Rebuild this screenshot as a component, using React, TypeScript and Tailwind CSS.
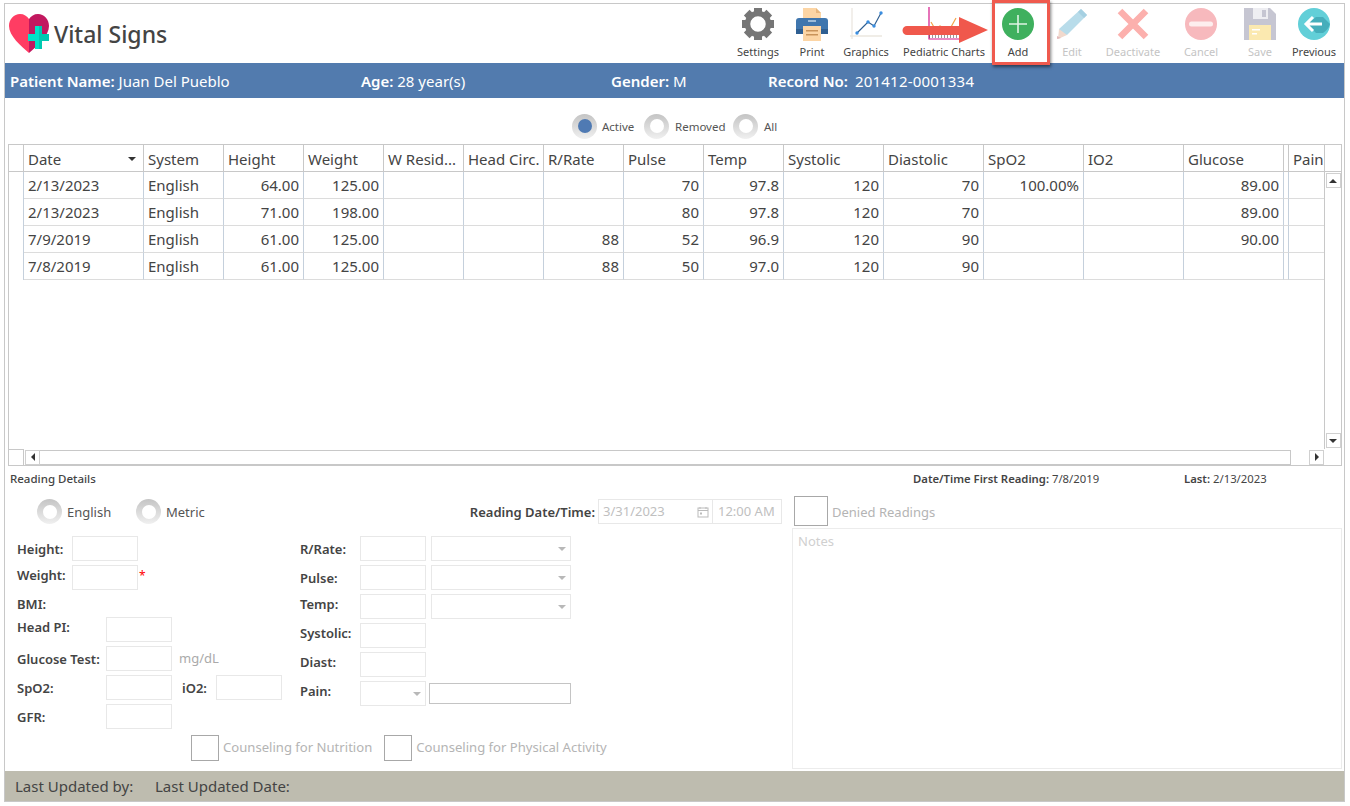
const columns = [
  { label: "Date", width: "w-[120px]" },
  { label: "System", width: "w-[80px]" },
  { label: "Height", width: "w-[80px]" },
  { label: "Weight", width: "w-[80px]" },
  { label: "W Resid...", width: "w-[80px]" },
  { label: "Head Circ.", width: "w-[80px]" },
  { label: "R/Rate", width: "w-[80px]" },
  { label: "Pulse", width: "w-[80px]" },
  { label: "Temp", width: "w-[80px]" },
  { label: "Systolic", width: "w-[100px]" },
  { label: "Diastolic", width: "w-[100px]" },
  { label: "SpO2", width: "w-[100px]" },
  { label: "IO2", width: "w-[100px]" },
  { label: "Glucose", width: "w-[100px]" },
  { label: "", width: "w-[5px]" },
  { label: "Pain", width: "w-[40px]" },
];

const rows = [
  ["2/13/2023", "English", "64.00", "125.00", "", "", "", "70", "97.8", "120", "70", "100.00%", "", "89.00", "", ""],
  ["2/13/2023", "English", "71.00", "198.00", "", "", "", "80", "97.8", "120", "70", "", "", "89.00", "", ""],
  ["7/9/2019", "English", "61.00", "125.00", "", "", "88", "52", "96.9", "120", "90", "", "", "90.00", "", ""],
  ["7/8/2019", "English", "61.00", "125.00", "", "", "88", "50", "97.0", "120", "90", "", "", "", "", ""],
];

function Gear() {
  return (
    <svg width="34" height="34" viewBox="0 0 34 34">
      {[0, 45, 90, 135, 180, 225, 270, 315].map((a) => (
        <rect key={a} x="13" y="1" width="8" height="8" fill="#767676" transform={`rotate(${a} 17 17)`} />
      ))}
      <circle cx="17" cy="17" r="10.5" fill="none" stroke="#767676" strokeWidth="5.5" />
    </svg>
  );
}

function Printer() {
  return (
    <svg width="34" height="34" viewBox="0 0 34 34">
      <path d="M8 1h13l5 5v8H8z" fill="#fcd5a5" />
      <path d="M21 1l5 5h-5z" fill="#e8b77f" />
      <path d="M4 11h26a3 3 0 0 1 3 3v13H1V14a3 3 0 0 1 3-3z" fill="#3f76ae" />
      <rect x="1" y="22" width="32" height="5" fill="#2f5f92" />
      <rect x="13" y="13" width="8" height="2" fill="#9dbcd9" />
      <rect x="8" y="19" width="18" height="15" fill="#fcd5a5" />
      <rect x="11" y="23" width="12" height="1.5" fill="#c9935a" />
      <rect x="11" y="27" width="12" height="1.5" fill="#c9935a" />
    </svg>
  );
}

function ChartIcon() {
  return (
    <svg width="34" height="34" viewBox="0 0 34 34">
      <path d="M3 1v31M1 29h32" stroke="#ebe7e0" strokeWidth="1.3" fill="none" />
      <path d="M8 26l11-11 6 4 7-13" stroke="#2f5f92" strokeWidth="1.2" fill="none" />
      <circle cx="8" cy="26" r="1.7" fill="#3a8ee0" />
      <circle cx="19" cy="15" r="1.7" fill="#3a8ee0" />
      <circle cx="25" cy="19" r="1.7" fill="#3a8ee0" />
      <circle cx="32" cy="6" r="1.7" fill="#3a8ee0" />
    </svg>
  );
}

function PediatricIcon() {
  return (
    <svg width="32" height="34" viewBox="0 0 32 34">
      <path d="M1 0v32h30" stroke="#d6188a" strokeWidth="1.2" fill="none" />
      <path d="M3 15l4 7 5-3 6 3 5-2 5-9" stroke="#f2a54a" strokeWidth="1.2" fill="none" />
      <path d="M1 28h30M1 30h30" stroke="#333" strokeWidth="1" strokeDasharray="1 2" fill="none" />
    </svg>
  );
}

function AddIcon() {
  return (
    <svg width="32" height="32" viewBox="0 0 32 32">
      <circle cx="16" cy="16" r="16" fill="#3fb05e" />
      <path d="M16 7v18M7 16h18" stroke="#dff3e4" strokeWidth="1.6" />
    </svg>
  );
}

function EditIcon() {
  return (
    <svg width="32" height="32" viewBox="0 0 32 32">
      <path d="M25 1l6 6-20 20-7-1-1-5z" fill="#b8dcea" />
      <path d="M25 1l6 6-3 3-6-6z" fill="#a5d0e2" />
      <path d="M3 21l8 6-9 4z" fill="#f1d9cd" />
      <path d="M1 28l4 2-4 1z" fill="#e3b9b9" />
    </svg>
  );
}

function DeactivateIcon() {
  return (
    <svg width="32" height="32" viewBox="0 0 32 32">
      <path d="M3 3l26 26M29 3L3 29" stroke="#fcb0ad" strokeWidth="6.5" />
    </svg>
  );
}

function CancelIcon() {
  return (
    <svg width="32" height="32" viewBox="0 0 32 32">
      <circle cx="16" cy="16" r="16" fill="#f7b9bd" />
      <rect x="4" y="13.5" width="24" height="5" rx="2.5" fill="#fdeeee" />
    </svg>
  );
}

function SaveIcon() {
  return (
    <svg width="32" height="32" viewBox="0 0 32 32">
      <path d="M0 0h26l6 6v26H0z" fill="#c6c6d2" />
      <rect x="9" y="0" width="15" height="11" fill="#eeeef2" />
      <rect x="18" y="2" width="4" height="7" fill="#c6c6d2" />
      <rect x="5" y="17" width="22" height="15" fill="#fbe9b0" />
      <rect x="8" y="21" width="8" height="1.5" fill="#fff" />
      <rect x="8" y="25" width="5" height="1.5" fill="#fff" />
    </svg>
  );
}

function PreviousIcon() {
  return (
    <svg width="32" height="32" viewBox="0 0 32 32">
      <circle cx="16" cy="16" r="16" fill="#62cfd8" />
      <path d="M9 16l9 9h7a16 16 0 0 0 7-9l-7-7H18z" fill="#46aebb" />
      <path d="M15 9l-7 7 7 7M8 16h16" stroke="#fff" strokeWidth="3" fill="none" />
    </svg>
  );
}

function ToolButton({ label, width, muted, children }: { label: string; width: string; muted?: boolean; children: React.ReactNode }) {
  return (
    <div className={`flex flex-col items-center ${width}`}>
      <div className="h-[34px] mt-[3px] flex items-center justify-center">{children}</div>
      <span className={`text-[11px] leading-[16px] mt-[3px] whitespace-nowrap ${muted ? "text-[#c4c4c4]" : "text-[#444]"}`}>{label}</span>
    </div>
  );
}

function Radio({ checked }: { checked?: boolean }) {
  return (
    <span className="w-[25px] h-[25px] rounded-full bg-gradient-to-b from-[#c4c4c4] to-[#f0f0f0] flex items-center justify-center shrink-0">
      <span className={`w-[14px] h-[14px] rounded-full ${checked ? "bg-[#4f7ab3]" : "bg-white"}`} />
    </span>
  );
}

function Input({ className = "w-[66px]" }: { className?: string }) {
  return <div className={`h-[25px] border border-[#e8e8e8] bg-white shrink-0 ${className}`} />;
}

function Select({ className = "w-[140px]" }: { className?: string }) {
  return (
    <div className={`h-[25px] border border-[#e8e8e8] bg-white shrink-0 flex items-center justify-end pr-[3px] ${className}`}>
      <span className="w-0 h-0 border-x-[4px] border-x-transparent border-t-[4px] border-t-[#b8b8b8] mr-[1px]" />
    </div>
  );
}

function FieldLabel({ children, className = "" }: { children: React.ReactNode; className?: string }) {
  return <span className={`text-[13px] font-semibold text-[#444] whitespace-nowrap ${className}`}>{children}</span>;
}

function ScrollButton({ dir, className = "" }: { dir: "up" | "down" | "left" | "right"; className?: string }) {
  const arrow = {
    up: "border-x-[4px] border-x-transparent border-b-[4px] border-b-[#333]",
    down: "border-x-[4px] border-x-transparent border-t-[4px] border-t-[#333]",
    left: "border-y-[4px] border-y-transparent border-r-[4px] border-r-[#333]",
    right: "border-y-[4px] border-y-transparent border-l-[4px] border-l-[#333]",
  }[dir];
  return (
    <div className={`w-[15px] h-[15px] border border-[#d0d0d0] bg-white flex items-center justify-center shrink-0 ${className}`}>
      <span className={`w-0 h-0 ${arrow}`} />
    </div>
  );
}

function Grid() {
  return (
    <div className="ml-[3px] w-[1334px] h-[322px] border border-[#c8c8c8] flex flex-col text-[15px] text-[#444]">
      <div className="flex-1 flex min-h-0">
        <div className="w-[1315px] overflow-hidden">
          <div className="flex h-[27px] border-b border-[#c8c8c8] w-[1400px]">
            <div className="w-[15px] shrink-0 border-r border-[#c8c8c8]" />
            {columns.map((c, i) => (
              <div key={i} className={`${c.width} shrink-0 border-r border-[#c8c8c8] ${c.label ? "px-[4px]" : ""} pt-[1px] leading-[26px] whitespace-nowrap overflow-hidden flex items-center justify-between`}>
                {c.label}
                {i === 0 && <span className="w-0 h-0 border-x-[4px] border-x-transparent border-t-[4px] border-t-[#333] mr-[3px]" />}
              </div>
            ))}
          </div>
          {rows.map((row, r) => (
            <div key={r} className="flex h-[27px] w-[1400px]">
              <div className="w-[15px] shrink-0 border-r border-[#c5d0dc]" />
              {row.map((v, i) => (
                <div key={i} className={`${columns[i].width} shrink-0 border-r border-b border-r-[#c5d0dc] border-b-[#dcdcdc] ${v ? "px-[4px]" : ""} leading-[26px] whitespace-nowrap ${i > 1 ? "text-right" : ""}`}>
                  {v}
                </div>
              ))}
            </div>
          ))}
        </div>
        <div className="w-[17px] flex flex-col items-center border-l border-[#c8c8c8] relative">
          <div className="h-[27px] w-full border-b border-[#c8c8c8] shrink-0" />
          <div className="flex-1 w-full flex flex-col items-center justify-between pt-[1px] pb-[1px] bg-white">
            <ScrollButton dir="up" />
            <ScrollButton dir="down" />
          </div>
        </div>
      </div>
      <div className="h-[16px] flex items-center shrink-0">
        <div className="w-[15px] h-full border-r border-t border-[#c8c8c8] shrink-0" />
        <ScrollButton dir="left" className="ml-[1px]" />
        <div className="w-[1251px] h-[15px] border border-[#c8c8c8] border-l-0 bg-white shrink-0" />
        <ScrollButton dir="right" className="ml-[18px]" />
      </div>
    </div>
  );
}

function LeftFields() {
  return (
    <div className="w-[283px] pl-[12px] flex flex-col shrink-0">
      <div className="h-[29px] flex items-center"><FieldLabel className="w-[55px] mt-[2px]">Height:</FieldLabel><Input /></div>
      <div className="h-[29px] flex items-center">
        <FieldLabel className="w-[55px] mb-[4px]">Weight:</FieldLabel>
        <Input />
        <span className="text-[#f00] text-[12px] ml-[1px] mb-[3px]">*</span>
      </div>
      <div className="h-[23px] flex items-center"><FieldLabel className="mt-[3px]">BMI:</FieldLabel></div>
      <div className="h-[29px] flex items-center"><FieldLabel className="w-[89px] mb-[4px]">Head PI:</FieldLabel><Input /></div>
      <div className="h-[29px] flex items-center">
        <FieldLabel className="w-[89px] mt-[2px]">Glucose Test:</FieldLabel>
        <Input />
        <span className="text-[13px] text-[#aaa] ml-[7px]">mg/dL</span>
      </div>
      <div className="h-[29px] flex items-center">
        <FieldLabel className="w-[89px] mt-[2px]">SpO2:</FieldLabel>
        <Input />
        <FieldLabel className="ml-[10px] w-[34px] mt-[2px]">iO2:</FieldLabel>
        <Input />
      </div>
      <div className="h-[29px] flex items-center"><FieldLabel className="w-[89px] mt-[2px]">GFR:</FieldLabel><Input /></div>
    </div>
  );
}

function MiddleFields() {
  return (
    <div className="flex flex-col pl-[12px]">
      <div className="h-[29px] flex items-center"><FieldLabel className="w-[60px] mt-[2px]">R/Rate:</FieldLabel><Input /><Select className="w-[140px] ml-[5px]" /></div>
      <div className="h-[29px] flex items-center"><FieldLabel className="w-[60px] mt-[2px]">Pulse:</FieldLabel><Input /><Select className="w-[140px] ml-[5px]" /></div>
      <div className="h-[29px] flex items-center"><FieldLabel className="w-[60px] mb-[4px]">Temp:</FieldLabel><Input /><Select className="w-[140px] ml-[5px]" /></div>
      <div className="h-[29px] flex items-center"><FieldLabel className="w-[60px] mb-[4px]">Systolic:</FieldLabel><Input /></div>
      <div className="h-[29px] flex items-center"><FieldLabel className="w-[60px] mb-[4px]">Diast:</FieldLabel><Input /></div>
      <div className="h-[29px] flex items-center">
        <FieldLabel className="w-[60px] mb-[4px]">Pain:</FieldLabel>
        <Select className="w-[66px]" />
        <div className="w-[142px] h-[21px] ml-[3px] border border-[#c4c4c4] bg-white" />
      </div>
    </div>
  );
}

function Check({ children, box }: { children: React.ReactNode; box: string }) {
  return (
    <div className="flex items-center">
      <div className={`${box} border border-[#a8a8a8] bg-white shrink-0`} />
      <span className="text-[13.1px] text-[#b4b4b4] ml-[4px] whitespace-nowrap">{children}</span>
    </div>
  );
}

export default function App() {
  return (
    <div className="w-[1350px] h-[806px] bg-white pt-[3px] pl-[4px] relative overflow-hidden font-['Noto_Sans',sans-serif]">
      <div className="w-[1341px] h-[799px] border border-[#c8c8c8] flex flex-col">
        {/* toolbar */}
        <div className="h-[59px] flex items-center justify-between shrink-0">
          <div className="flex items-center pl-[4px]">
            <svg width="41" height="40" viewBox="0 0 41 40">
              <path d="M20 39C12 32 0 22 0 12 0 5 5 0 11 0c4 0 7 2 9 5z" fill="#ff3d63" />
              <path d="M20 39c8-7 20-17 20-27C40 5 35 0 29 0c-4 0-7 2-9 5z" fill="#c2185f" />
              <path d="M27 14h7v8h7v7h-7v8h-7v-8h-7v-7h7z" fill="#00e5c8" transform="translate(-1 -2)" />
              <path d="M30 12h3v8h7v7h-7v8h-3z" fill="#00c9b1" />
            </svg>
            <span className="text-[23px] font-medium text-[#444] ml-[4px] pt-[2px]">Vital Signs</span>
          </div>
          <div className="flex items-start h-full">
            <ToolButton label="Settings" width="w-[60px]"><Gear /></ToolButton>
            <ToolButton label="Print" width="w-[48px]"><Printer /></ToolButton>
            <ToolButton label="Graphics" width="w-[60px]"><ChartIcon /></ToolButton>
            <ToolButton label="Pediatric Charts" width="w-[96px]"><PediatricIcon /></ToolButton>
            <ToolButton label="Add" width="w-[52px]"><AddIcon /></ToolButton>
            <ToolButton label="Edit" width="w-[56px]" muted><EditIcon /></ToolButton>
            <ToolButton label="Deactivate" width="w-[66px]" muted><DeactivateIcon /></ToolButton>
            <ToolButton label="Cancel" width="w-[70px]" muted><CancelIcon /></ToolButton>
            <ToolButton label="Save" width="w-[48px]" muted><SaveIcon /></ToolButton>
            <ToolButton label="Previous" width="w-[60px]"><PreviousIcon /></ToolButton>
          </div>
        </div>

        {/* patient bar */}
        <div className="h-[35px] bg-[#527bae] text-white text-[15px] flex items-center pl-[5px] pt-[2px] shrink-0">
          <div className="w-[351px]"><span className="font-semibold">Patient Name:</span> Juan Del Pueblo</div>
          <div className="w-[250px]"><span className="font-semibold">Age:</span> 28 year(s)</div>
          <div className="w-[157px]"><span className="font-semibold">Gender:</span> M</div>
          <div><span className="font-semibold">Record No:</span><span className="ml-[7px] tracking-[0.2px]">201412-0001334</span></div>
        </div>

        {/* status filter */}
        <div className="h-[46px] flex items-center pl-[567px] pt-[10px] text-[11.5px] text-[#555] shrink-0">
          <Radio checked />
          <span className="ml-[5px] w-[42px] mt-[2px]">Active</span>
          <Radio />
          <span className="ml-[6px] w-[58px] mt-[2px]">Removed</span>
          <Radio />
          <span className="ml-[6px] mt-[2px]">All</span>
        </div>

        <Grid />

        {/* reading details */}
        <div className="h-[26px] flex items-center text-[11.5px] text-[#444] font-medium pl-[5px] shrink-0">
          <span className="w-[903px]">Reading Details</span>
          <span className="w-[271px] font-semibold text-[11.3px]">Date/Time First Reading: <span className="font-normal">7/8/2019</span></span>
          <span className="font-semibold text-[11.3px]">Last: <span className="font-normal">2/13/2023</span></span>
        </div>

        <div className="flex-1 flex min-h-0">
          <div className="w-[787px] flex flex-col shrink-0">
            <div className="h-[42px] flex items-start pt-[7px] shrink-0">
              <div className="ml-[32px] flex items-center h-[25px]">
                <Radio />
                <span className="text-[13px] text-[#555] ml-[5px] w-[69px] mt-[2px]">English</span>
                <Radio />
                <span className="text-[13px] text-[#555] ml-[5px] mt-[2px]">Metric</span>
              </div>
              <div className="ml-auto flex items-center h-[25px] pr-[10px]">
                <span className="text-[13px] font-semibold text-[#444] mr-[3px] mt-[2px]">Reading Date/Time:</span>
                <div className="w-[115px] h-[25px] border border-[#e8e8e8] flex items-center justify-between pl-[4px] pr-[3px] text-[13px] text-[#c0c0c0]">
                  3/31/2023
                  <svg width="12" height="12" viewBox="0 0 12 12" fill="none" stroke="#bbb">
                    <rect x="1" y="2" width="10" height="9" />
                    <path d="M1 4.5h10M3 1v2M9 1v2" />
                    <rect x="3" y="6.5" width="2" height="2" fill="#bbb" stroke="none" />
                  </svg>
                </div>
                <div className="w-[69px] h-[25px] border border-l-0 border-[#e8e8e8] flex items-center pl-[5px] text-[13px] text-[#c0c0c0] whitespace-nowrap">12:00 AM</div>
              </div>
            </div>
            <div className="flex shrink-0">
              <LeftFields />
              <MiddleFields />
            </div>
            <div className="flex items-center gap-[12px] pl-[186px] mt-[4px]">
              <Check box="w-[28px] h-[26px]">Counseling for Nutrition</Check>
              <Check box="w-[28px] h-[26px]">Counseling for Physical Activity</Check>
            </div>
          </div>
          <div className="flex-1 flex flex-col pr-[2px]">
            <div className="flex items-start h-[36px] pl-[2px] pt-[4px] shrink-0">
              <div className="w-[34px] h-[30px] border border-[#a8a8a8]" />
              <span className="text-[13px] leading-[32px] text-[#b4b4b4] ml-[4px]">Denied Readings</span>
            </div>
            <div className="w-[550px] h-[241px] border border-[#ececec] px-[5px] py-[3px] text-[13px] text-[#d0d0d0]">Notes</div>
          </div>
        </div>

        {/* footer */}
        <div className="h-[30px] bg-[#bebcaf] text-[15px] text-[#444] flex items-center pl-[10px] shrink-0">
          <span className="w-[140px]">Last Updated by:</span>
          <span>Last Updated Date:</span>
        </div>
      </div>

      {/* highlight over the Add button */}
      <div className="absolute left-[992px] top-0 w-[58px] h-[65px] border-[3px] border-[#ef5a4e] shadow-[1px_2px_3px_rgba(0,0,0,0.5)]" />
      <svg className="absolute left-[902px] top-[16px]" width="88" height="30" viewBox="0 0 88 30">
        <path d="M5 10h52V1l29 13-29 13v-8H5a4.5 4.5 0 0 1 0-9z" fill="#f0584c" />
      </svg>
    </div>
  );
}
